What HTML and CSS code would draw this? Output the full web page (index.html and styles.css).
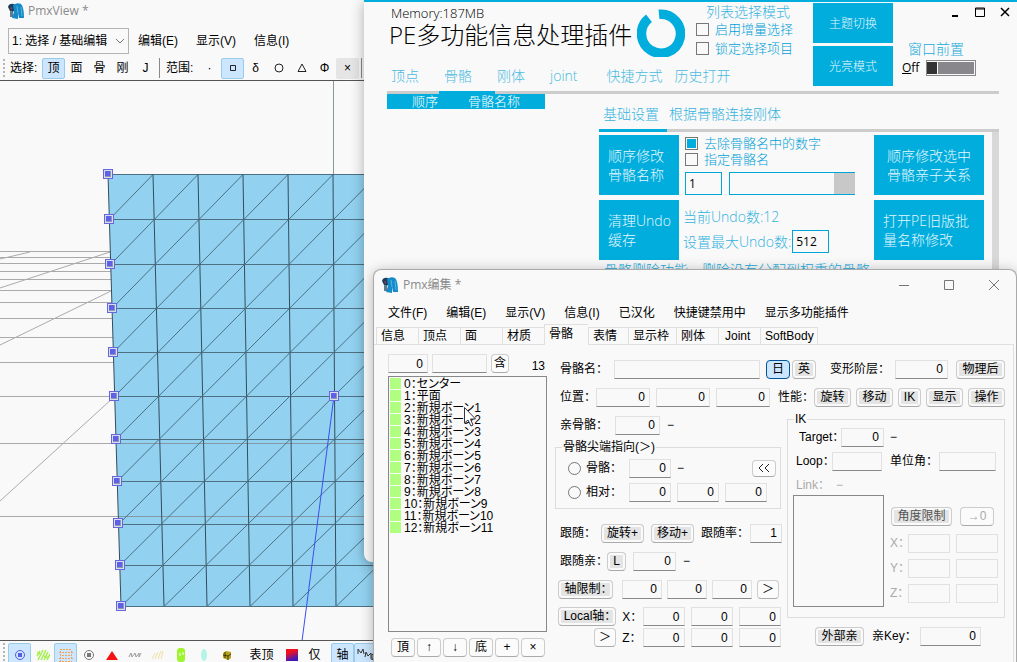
FILE: index.html
```html
<!DOCTYPE html>
<html lang="zh-CN">
<head>
<meta charset="utf-8">
<title>PmxEditor</title>
<link rel="stylesheet" href="styles.css">
</head>
<body>
<svg width="0" height="0" class="defs" aria-hidden="true">
  <symbol id="logo" viewBox="0 0 16 16">
    <path d="M0 4 Q1 0 6 1 L8 5 L5 9 L2 8Z" fill="#173f5e"/>
    <path d="M2 8 L5 9 L5 14 L2 14Z" fill="#5d7c8e"/>
    <path d="M5 2 Q9 -1 13 1 Q16 4 16 15 L11 15 L10 10 L10 16 L4 15 L6 9Z" fill="#168ac8"/>
    <path d="M9 3 L10 10 M13 4 L14 13" stroke="#53b5e4" fill="none"/>
    <path d="M2 5 L4 4 L4 7Z" fill="#b03947"/>
  </symbol>
  <symbol id="mark" viewBox="0 0 10 10">
    <rect x=".5" y=".5" width="9" height="9" fill="#d9dcec" stroke="#6767dd"/>
    <rect x="2" y="2" width="6" height="6" fill="#8b98b2"/>
    <rect x="2" y="2" width="5" height="5" fill="#5f60e8"/>
  </symbol>
</svg>
<main class="desktop">

<section class="window view">
  <header class="view-title"><svg class="logo"><use href="#logo"/></svg><span>PmxView *</span></header>
  <nav class="view-menu">
    <span class="combo"><select aria-label="模式"><option>1: 选择 / 基础编辑</option></select><svg viewBox="0 0 10 6"><path d="M1 1 L5 5 L9 1"/></svg></span>
    <button>编辑(E)</button><button>显示(V)</button><button>信息(I)</button>
  </nav>
  <div class="tools">
    <i class="grip"></i><span class="cap">选择:</span>
    <button class="on">顶</button><button>面</button><button>骨</button><button>刚</button><button>J</button>
    <i class="sep"></i><span class="cap">范围:</span>
    <button>·</button><button class="on" aria-label="矩形"><svg viewBox="0 0 14 14"><path class="ink" d="M4.500 4.500h5v5h-5z"/></svg></button><button>δ</button>
    <button aria-label="圆"><svg viewBox="0 0 14 14"><circle class="ink" cx="7" cy="7" r="4"/></svg></button>
    <button aria-label="三角"><svg viewBox="0 0 14 14"><path class="ink" d="M7 3 L11 10.500 H3Z"/></svg></button>
    <button>Φ</button><button class="dim">×</button><i class="sep"></i>
  </div>
  <svg class="scene" viewBox="0 81 374 560" preserveAspectRatio="xMinYMin slice">
    <path class="floor" d="M0 251.500H374M0 257.500H374M0 263.500H374M0 271.500H374M0 279.500H374M0 290.500H374M0 302.500H374M0 318.500H374M0 337.500H374M0 362.500H374M0 396.500H374M0 443.500H374M0 516.500H374M0 259L30 252M0 288L110 252M0 345L111 291M0 501L114 397"/>
    <path class="pole" d="M333.500 81V174"/>
    <path class="plane" d="M108 174.500H374V606.500H121Z"/>
    <path class="floor faint" d="M118 443.500H374M119 516.500H374"/>
    <path class="mesh" d="M108 174.500H374M109 219.500H374M110 264.500H374M112 308.500H374M113 352.500H374M114 396.500H374M116 439.500H374M117 481.500H374M118 524.500H374M120 565.500H374M121 606.500H374"/>
    <path class="mesh dark" d="M108 174L121 606M153 174L164 606M198 174L207 606M243 174L250 606M288 174L293 606M333 174L336 606"/>
    <path class="mesh" d="M109.300 219.500L153 174.500M110.600 264.500L198 174.500M111.900 308.500L243 174.500M113.200 352.500L288 174.500M114.500 396.500L333 174.500M115.800 439.500L378 174.500M117.100 481.500L378 219.500M118.400 524.500L378 264.500M119.700 565.500L378 308.500M121 606.500L378 352.500M164 606.500L378 396.500M207 606.500L378 439.500M250 606.500L378 481.500M293 606.500L378 524.500M336 606.500L378 565.500"/>
    <path class="bone" d="M334 396L302 641"/>
    <g>
      <use href="#mark" x="103" y="169" width="10" height="10"/><use href="#mark" x="104" y="214" width="10" height="10"/>
      <use href="#mark" x="105" y="259" width="10" height="10"/><use href="#mark" x="107" y="303" width="10" height="10"/>
      <use href="#mark" x="108" y="347" width="10" height="10"/><use href="#mark" x="109" y="391" width="10" height="10"/>
      <use href="#mark" x="111" y="434" width="10" height="10"/><use href="#mark" x="112" y="476" width="10" height="10"/>
      <use href="#mark" x="113" y="518" width="10" height="10"/><use href="#mark" x="115" y="560" width="10" height="10"/>
      <use href="#mark" x="116" y="601" width="10" height="10"/><use href="#mark" x="329" y="391" width="10" height="10"/>
    </g>
  </svg>
  <div class="tools foot">
    <i class="grip"></i>
    <button class="on" aria-label="顶点"><svg viewBox="0 0 14 14"><circle cx="7" cy="7" r="4.500" fill="none" stroke="#5b5be0"/><rect x="5" y="5" width="4" height="4" fill="#5b5be0"/></svg></button>
    <button aria-label="面"><svg viewBox="0 0 14 14"><path d="M1 8L4 3M2 12L7 2M5 12L10 2M8 12L12 4M11 12L14 6M1 4L5 7M8 8L13 10" stroke="#a5ef4e" stroke-width="1.500"/></svg></button>
    <button class="on" aria-label="网格"><svg viewBox="0 0 14 14"><path d="M1 1.500H13M0 4.500H14M3 7.500H11M0 10.500H14M0 13.500H13M1.500 3V13M12.500 3V11" fill="none" stroke="#f2a355" stroke-dasharray="2 1"/></svg></button>
    <button aria-label="骨骼"><svg viewBox="0 0 14 14"><circle cx="7" cy="7" r="4.500" fill="none" stroke="#777"/><rect x="5" y="5" width="4" height="4" fill="#777"/></svg></button>
    <button aria-label="法线"><svg viewBox="0 0 14 14"><path d="M7 3L13 12H1Z" fill="#f31212"/></svg></button>
    <button aria-label="线"><svg viewBox="0 0 14 14"><path d="M1 9L3 5L4 9L7 5L8 9L11 5L11 9L13 5" fill="none" stroke="#999"/></svg></button>
    <button aria-label="切线"><svg viewBox="0 0 14 14"><path d="M1 11L4 5M4 11L7 4M7 11L10 3M10 11L12 3" stroke="#f3dfa5"/></svg></button>
    <button aria-label="刚体"><svg viewBox="0 0 14 14"><rect x="3" y="0" width="8" height="14" rx="3" fill="#9ff32f"/><path d="M6 5V8M9 4V7" stroke="#fff"/></svg></button>
    <button aria-label="胶囊"><svg viewBox="0 0 14 14"><ellipse cx="7" cy="7" rx="3" ry="6" fill="#b2f5e7"/></svg></button>
    <button aria-label="关节"><svg viewBox="0 0 14 14"><path d="M3 5L6 3L11 4V10L8 12L3 10Z" fill="#b7a31c"/><path d="M3 7L8 8L11 6M8 8V12M5 4V10" fill="none" stroke="#403a08"/></svg></button>
    <i class="sep"></i><button class="wide">表顶</button><button aria-label="颜色"><i class="swatch"></i></button><button>仅</button>
    <i class="sep"></i><button class="on">轴</button><button class="on" aria-label="MMD"><svg class="mmd" viewBox="0 0 18 14"><path d="M1 6V1L4 5L6 1L7 6M8 9L9 4L11 8L14 5L14 11M15 12V6Q19 8 15 12"/></svg></button>
  </div>
</section>

<section class="window plugin">
  <header class="plug-head">
    <div class="plug-main">
      <div class="plug-top">
        <div class="brand"><span>Memory:187MB</span><h1>PE多功能信息处理插件</h1></div>
        <svg class="ring" viewBox="0 0 48 48"><path d="M22 5.300 A19.500 19.500 0 1 1 12 9.300" fill="none" stroke="#00addc" stroke-width="9.500"/></svg>
        <div class="modes"><span class="modes-title">列表选择模式</span>
          <label><input type="checkbox">启用增量选择</label><label><input type="checkbox">锁定选择项目</label></div>
      </div>
      <nav class="plug-tabs"><a href="#">顶点</a><a href="#">骨骼</a><a href="#">刚体</a><a href="#">joint</a><a href="#">快捷方式</a><a href="#">历史打开</a></nav>
    </div>
    <div class="themes"><button class="tile">主题切换</button><button class="tile">光亮模式</button></div>
    <div class="plug-side">
      <div class="sys"><button aria-label="最小化"><svg viewBox="0 0 10 10"><path d="M2 9H8" stroke-width="2"/></svg></button><button aria-label="最大化"><svg viewBox="0 0 10 10"><path d="M.5 1H9.500V9.500H.5ZM0 2H10"/></svg></button><button aria-label="关闭"><svg viewBox="0 0 10 10"><path d="M1 1L9 9M9 1L1 9" stroke-width="1.500"/></svg></button></div>
      <span class="front">窗口前置</span>
      <label class="switch"><span><u>O</u>ff</span><input type="checkbox"></label>
    </div>
  </header>
  <div class="rule main-rule"><i></i></div>
  <div class="plug-body">
    <table class="bones"><thead><tr><th>顺序</th><th>骨骼名称</th></tr></thead></table>
    <div class="settings">
      <nav class="sub-tabs"><a href="#">基础设置</a><a href="#">根据骨骼连接刚体</a></nav>
      <div class="rule sub-rule"><i></i></div>
      <div class="scroll">
        <div class="cards">
          <button class="tile left">顺序修改<br>骨骼名称</button>
          <div class="opts">
            <label><input type="checkbox" checked>去除骨骼名中的数字</label>
            <label><input type="checkbox">指定骨骼名</label>
            <div class="fields"><input class="num" aria-label="起始" value="1"><span class="picker"><input aria-label="骨骼名"><button aria-label="选择"></button></span></div>
          </div>
          <button class="tile left big">顺序修改选中<br>骨骼亲子关系</button>
          <button class="tile left">清理Undo<br>缓存</button>
          <div class="undo"><span>当前Undo数:12</span><label>设置最大Undo数:<input class="num" value="512"></label></div>
          <button class="tile left">打开PE旧版批<br>量名称修改</button>
        </div>
        <fieldset class="remove"><legend>骨骼删除功能，删除没有分配到权重的骨骼</legend></fieldset>
      </div>
    </div>
  </div>
</section>

<section class="window editor">
  <header class="ed-title"><svg class="logo"><use href="#logo"/></svg><span>Pmx编集 *</span>
    <div class="ctl"><button aria-label="最小化"><svg viewBox="0 0 12 12"><path d="M1 6.500H11"/></svg></button><button aria-label="最大化"><svg viewBox="0 0 12 12"><path d="M1.500 1.500H10.500V10.500H1.500Z"/></svg></button><button aria-label="关闭"><svg viewBox="0 0 12 12"><path d="M1 1L11 11M11 1L1 11"/></svg></button></div></header>
  <nav class="ed-menu"><button>文件(F)</button><button>编辑(E)</button><button>显示(V)</button><button>信息(I)</button><button>已汉化</button><button>快捷键禁用中</button><button>显示多功能插件</button></nav>
  <div class="ed-tabs" role="tablist"><button role="tab">信息</button><button role="tab">顶点</button><button role="tab">面</button><button role="tab">材质</button><button role="tab" class="sel" aria-selected="true">骨骼</button><button role="tab">表情</button><button role="tab">显示枠</button><button role="tab">刚体</button><button role="tab">Joint</button><button role="tab">SoftBody</button></div>
  <div class="panel">
    <div class="list-col">
      <div class="search"><input aria-label="序号" value="0"><input aria-label="查找"><button class="btn">含</button><span>13</span></div>
      <ul class="list">
        <li>0：センター</li><li>1：平面</li><li>2：新規ボーン1</li><li>3：新規ボーン2</li><li>4：新規ボーン3</li><li>5：新規ボーン4</li><li>6：新規ボーン5</li><li>7：新規ボーン6</li><li>8：新規ボーン7</li><li>9：新規ボーン8</li><li>10：新規ボーン9</li><li>11：新規ボーン10</li><li>12：新規ボーン11</li>
      </ul>
      <div class="moves"><button class="btn">頂</button><button class="btn">↑</button><button class="btn">↓</button><button class="btn">底</button><button class="btn">+</button><button class="btn">×</button></div>
    </div>
    <form class="form">
      <div class="row name"><label for="nm">骨骼名：</label><input id="nm"><button type="button" class="btn blue">日</button><button type="button" class="btn tg">英</button><label for="lv">变形阶层：</label><input id="lv" value="0"><button type="button" class="btn tg">物理后</button></div>
      <div class="row pos"><label for="px">位置：</label><input id="px" value="0"><input aria-label="位置 Y" value="0"><input aria-label="位置 Z" value="0"><span>性能：</span><div class="caps"><button type="button" class="btn tg">旋转</button><button type="button" class="btn tg">移动</button><button type="button" class="btn tg slim">IK</button><button type="button" class="btn tg">显示</button><button type="button" class="btn tg">操作</button></div></div>
      <div class="halves">
        <div class="half">
          <div class="row parent"><label for="pa">亲骨骼：</label><input id="pa" value="0"><span>−</span></div>
          <fieldset class="box tip"><legend>骨骼尖端指向(＞)</legend>
            <div class="row tiprow"><label><input type="radio" name="tip">骨骼：</label><input aria-label="骨骼" value="0"><span>−</span><button type="button" class="btn back" aria-label="展开"><svg viewBox="0 0 12 10"><path d="M5 1L1 5L5 9M11 1L7 5L11 9"/></svg></button></div>
            <div class="row tiprow"><label><input type="radio" name="tip">相对：</label><input aria-label="相对 X" value="0"><input aria-label="相对 Y" value="0"><input aria-label="相对 Z" value="0"></div>
          </fieldset>
          <div class="row follow"><span>跟随：</span><button type="button" class="btn tg">旋转+</button><button type="button" class="btn tg">移动+</button><label for="fr">跟随率：</label><input id="fr" value="1"></div>
          <div class="row fparent"><label for="fp">跟随亲：</label><button type="button" class="btn tg">L</button><input id="fp" value="0"><span>−</span></div>
          <div class="row axis"><button type="button" class="btn tg">轴限制：</button><input aria-label="轴 X" value="0"><input aria-label="轴 Y" value="0"><input aria-label="轴 Z" value="0"><button type="button" class="btn">＞</button></div>
          <div class="local">
            <button type="button" class="btn tg">Local轴：</button><span>X：</span><input aria-label="X 1" value="0"><input aria-label="X 2" value="0"><input aria-label="X 3" value="0">
            <button type="button" class="btn go">＞</button><span>Z：</span><input aria-label="Z 1" value="0"><input aria-label="Z 2" value="0"><input aria-label="Z 3" value="0">
          </div>
        </div>
        <div class="half ikcol">
          <fieldset class="box ik"><legend>IK</legend>
            <div class="row target"><label for="tg">Target：</label><input id="tg" value="0"><span>−</span></div>
            <div class="row loop"><label for="lp">Loop：</label><input id="lp"><label for="an">单位角：</label><input id="an"></div>
            <div class="row off link"><span>Link：</span><span>−</span></div>
            <div class="limits"><ul class="links"></ul>
              <div class="angles"><div class="anglehead"><button type="button" class="btn tg grey">角度限制</button><button type="button" class="btn" disabled>→0</button></div>
                <div class="row off"><span>X：</span><input disabled aria-label="X 下限"><input disabled aria-label="X 上限"></div>
                <div class="row off"><span>Y：</span><input disabled aria-label="Y 下限"><input disabled aria-label="Y 上限"></div>
                <div class="row off"><span>Z：</span><input disabled aria-label="Z 下限"><input disabled aria-label="Z 上限"></div></div>
            </div>
          </fieldset>
          <div class="row outer"><button type="button" class="btn tg">外部亲</button><label for="ky">亲Key：</label><input id="ky" value="0"></div>
        </div>
      </div>
    </form>
  </div>
</section>
<svg class="cursor" viewBox="0 0 12 20" aria-hidden="true"><path d="M.5 .5V16L4 13L7 19L9 18L6.500 12H11.500Z" fill="#fff" stroke="#334"/></svg>
</main>
</body>
</html>
```
FILE: styles.css
```css
* { box-sizing: border-box; }
body { margin: 0; background: #f9f9f9; font: 12px/16px "Liberation Sans", "Noto Sans CJK SC", sans-serif; color: #000; }
button, input, select { font: inherit; color: inherit; margin: 0; padding: 0; border: 0; background: none; border-radius: 0; outline: 0; min-width: 0; }
button { white-space: nowrap; }
a { text-decoration: none; color: inherit; }
fieldset, ul, h1 { margin: 0; padding: 0; border: 0; min-width: 0; }
ul { list-style: none; }
.defs { position: absolute; }
.desktop { position: relative; height: 100vh; overflow: hidden; }
.window { position: absolute; background: #f9f9f9; }
.logo { width: 16px; height: 16px; }

/* 3D view */
.view { left: 0; top: 0; bottom: 0; width: 374px; display: flex; flex-direction: column; }
.view-title { display: flex; align-items: center; gap: 4px; height: 22px; padding: 0 8px; color: #8a8a8a; font-family: "Open Sans", sans-serif; }
.view-menu { display: flex; align-items: center; height: 34px; padding-left: 8px; gap: 18px; }
.view-menu button { line-height: 20px; padding-top: 4px; }
.combo { display: flex; align-items: center; position: relative; width: 121px; height: 26px; margin: 3px -9px 0 0; border: 1px solid #b4b4b4; }
.combo select { width: 100%; appearance: none; padding-left: 3px; }
.combo svg { position: absolute; right: 3px; width: 10px; height: 6px; fill: none; stroke: #777; pointer-events: none; }
.tools { display: flex; align-items: center; height: 25px; padding-left: 3px; border-bottom: 1px solid #555; white-space: nowrap; }
.tools button { width: 23px; height: 21px; flex: none; display: flex; align-items: center; justify-content: center; border: 1px solid transparent; border-radius: 2px; }
.tools button.on { background: #cce6ff; border-color: #9acbe9; }
.tools button.dim { background: #e5e5e5; }
.tools button.wide { width: 37px; }
.tools svg { width: 14px; height: 14px; }
.tools .mmd { width: 18px; fill: none; stroke: #333; }
.ink { fill: none; stroke: #222; }
.cap { width: 32px; }
.grip { width: 2px; height: 18px; margin-right: 5px; border-left: 2px dotted #b5b5b5; }
.sep { width: 1px; height: 20px; margin: 0 6px 0 2px; background: #888; }
.swatch { width: 12px; height: 12px; background: linear-gradient(160deg, #f01020 30%, #4418b8 80%); }
.scene { flex: 1; width: 100%; min-height: 0; display: block; }
.foot { height: 22px; border: 0; border-top: 1px solid #555; padding: 2px 0 0; align-items: flex-start; }
.foot button { height: 23px; }
.foot .grip { margin-left: 3px; margin-right: 3px; }
.foot .sep { margin: 0 3px 0 2px; }
.floor { stroke: #aaa; fill: none; }
.faint { stroke: #8099a5; }
.pole { stroke: #8e9a8e; }
.plane { fill: #92d2f0; }
.mesh { stroke: #4d7183; fill: none; }
.dark { stroke: #344d5d; }
.bone { stroke: #3b4ef0; }

/* plugin */
.plugin { left: 364px; right: 0; top: 0; height: 562px; padding: 0 18px 0 23px; border-top: 2px solid #00addc; border-radius: 0 0 8px 8px; overflow: hidden; color: #20a9dc; font: 300 14px/19px "Open Sans", "Noto Sans CJK SC", sans-serif; box-shadow: 0 2px 14px rgb(0 0 0 / 30%); }
.plug-head { display: flex; height: 89px; }
.plug-main { flex: 1; display: flex; flex-direction: column; justify-content: space-between; }
.plug-top { display: flex; padding-top: 2px; }
.brand { width: 250px; padding-left: 2px; color: #000; }
.brand span { display: block; font-size: 13px; line-height: 18px; padding-left: 2px; }
h1 { font-size: 24px; font-weight: 300; line-height: 26px; white-space: nowrap; }
.ring { width: 48px; height: 48px; margin: 5px 11px 0 0; }
.modes { display: flex; flex-direction: column; font-size: 13px; color: #00a0d8; }
.modes-title { font-size: 14px; line-height: 16px; padding-left: 10px; color: #35b3df; }
label { display: flex; align-items: center; white-space: nowrap; }
.plugin input[type=checkbox] { appearance: none; width: 13px; height: 13px; margin-right: 6px; border: 1px solid #777; background: #f9f9f9; }
.plugin input[type=checkbox]:checked { background: #00addc; box-shadow: inset 0 0 0 1px #f9f9f9; }
.plug-tabs { display: flex; line-height: 20px; padding: 0 0 5px 4px; gap: 25px; color: #4ab9df; }
.plug-tabs a:nth-child(4) { padding-right: 4px; }
.plug-tabs a:last-child { margin-left: -13px; }
.tile { background: #00addc; color: #e4f7ff; display: flex; align-items: center; justify-content: center; font-size: 12px; }
.themes { width: 80px; display: grid; grid-template-rows: 40px 40px; gap: 3px; padding-top: 1px; }
.plug-side { width: 106px; display: flex; flex-direction: column; padding-left: 9px; }
.sys { display: flex; justify-content: flex-end; gap: 15px; height: 37px; margin-right: -11px; padding-top: 5px; align-items: flex-start; }
.sys button { width: 10px; height: 10px; }
.sys svg { width: 10px; height: 10px; display: block; fill: none; stroke: #000; }
.front { padding-left: 6px; line-height: 20px; }
.switch { font-size: 12px; line-height: 18px; color: #000; gap: 7px; font-weight: 400; }
.plugin .switch input { width: 50px; height: 16px; margin: 0; background: linear-gradient(90deg, #333 10px, #f9f9f9 10px 11px, #88888c 11px); border: 1px solid #888; box-shadow: inset -1px 0 #f9f9f9, inset 0 1px #f9f9f9, inset 0 -1px #f9f9f9; }
.rule { height: 3px; background: #ccc; display: flex; }
.rule i { background: #00addc; }
.main-rule i { width: 56px; margin-left: 52px; }
.sub-rule i { width: 68px; }
.plug-body { display: flex; justify-content: space-between; }
.bones { width: 158px; height: 15px; border-collapse: collapse; align-self: flex-start; background: #00addc; color: #fff; font-size: 13px; line-height: 15px; }
.bones th { font-weight: 300; padding: 0 0 0 25px; text-align: left; }
.bones th:first-child { width: 56px; }
.settings { width: 400px; }
.sub-tabs { display: flex; gap: 10px; padding: 10px 0 6px 4px; color: #35b3df; }
.scroll { border-right: 7px solid #d8d8d8; padding: 3px 8px 0 0; height: 430px; }
.cards { display: grid; grid-template-columns: 80px 1fr 110px; grid-auto-rows: 60px; row-gap: 5px; }
.tile.left { font-size: 14px; line-height: 19px; text-align: left; justify-content: flex-start; padding-left: 9px; }
.tile.big { justify-content: center; padding: 0; }
.opts { padding-left: 6px; font-size: 13px; line-height: 16px; color: #00a0d8; }
.fields { display: flex; gap: 7px; padding-top: 5px; }
.plugin input.num { width: 37px; height: 23px; border: 1px solid #00a6d8; color: #000; font-size: 12px; font-weight: 400; padding-left: 3px; }
.picker { display: flex; width: 126px; height: 23px; border: 1px solid #00a6d8; border-right: 0; }
.picker input { flex: 1; }
.picker button { width: 21px; background: #c8c8c8; }
.undo { padding: 7px 0 0 4px; display: flex; flex-direction: column; gap: 4px; color: #35b3df; }
.undo label { gap: 1px; }
.remove { border: 1px solid #ccc; height: 100px; }
.remove legend { margin-left: 2px; white-space: nowrap; }

/* model editor */
.editor { left: 373px; right: 0; top: 269px; bottom: 0; display: flex; flex-direction: column; border: 1px solid #aaa; border-bottom: 0; border-radius: 8px 8px 0 0; box-shadow: 0 2px 14px rgb(0 0 0 / 28%); font-feature-settings: "palt"; }
.ed-title { display: flex; align-items: center; gap: 5px; height: 30px; padding: 0 16px 0 8px; color: #8a8a8a; font-family: "Open Sans", "Noto Sans CJK SC", sans-serif; }
.ctl { margin-left: auto; display: flex; gap: 33px; }
.ctl button, .ctl svg { width: 12px; height: 12px; display: block; fill: none; stroke: #777; }
.ed-menu { display: flex; gap: 19px; height: 26px; padding-left: 14px; align-items: center; }
.ed-tabs { display: flex; align-items: flex-end; height: 19px; padding-left: 2px; margin-bottom: -1px; position: relative; }
.ed-tabs button { width: 42px; height: 18px; line-height: 16px; text-align: left; padding-left: 4px; border: 1px solid #e0e0e0; border-right: 0; }
.ed-tabs button:nth-child(5) { width: 44px; height: 21px; background: #f9f9f9; border-bottom: 0; line-height: 18px; padding-bottom: 2px; }
.ed-tabs button:nth-child(6) { width: 40px; }
.ed-tabs button:nth-child(7) { width: 48px; }
.ed-tabs button:nth-child(9) { padding-left: 6px; }
.ed-tabs button:nth-child(10) { width: 58px; border-right: 1px solid #e0e0e0; }
.panel { flex: 1; display: flex; min-height: 0; gap: 8px; margin-right: 2px; border: 1px solid #e0e0e0; border-width: 1px 1px 0 0; padding: 9px 8px 5px 14px; }
.panel input:not([type=radio]) { height: 19px; border: 1px solid #e1e1e1; border-bottom-color: #888; text-align: right; padding: 0 4px; width: 100%; }
.panel input:disabled { border-bottom-color: #e1e1e1; }
.btn { height: 19px; line-height: 15px; border: 1px solid #ccc; border-bottom-color: #aaa; border-radius: 4px; background: #fbfbfb; text-align: center; }
.btn.tg { background: #e4e4e4; box-shadow: inset 0 0 0 2px #fafafa; }
.btn.blue { background: #cce6ff; border-color: #005499; }
.btn:disabled, .off { color: #aaa; }
.btn.grey { color: #555; }
.list-col { width: 159px; flex: none; display: flex; flex-direction: column; }
.search { display: grid; grid-template-columns: 40px 55px 18px 1fr; gap: 4px; height: 22px; }
.search .btn { margin: 0; }
.search span { text-align: right; padding: 4px 2px 0 0; }
.list { flex: 1; min-height: 0; overflow: hidden; border: 1px solid #888; padding: 1px; font-family: "Liberation Sans", "Noto Sans CJK JP", sans-serif; }
.list li { height: 12px; line-height: 12px; display: flex; gap: 3px; white-space: nowrap; }
.list li::before { content: ""; width: 11px; height: 11px; background: #b0ff80; }
.moves { display: grid; grid-template-columns: repeat(6, 1fr); gap: 2px; padding: 6px 2px 0 3px; height: 25px; }
.form { flex: 1; display: flex; flex-direction: column; gap: 8px; padding-top: 5px; }
.row { display: grid; align-items: center; height: 20px; white-space: nowrap; }
.name { grid-template-columns: 54px 1fr 24px 26px 79px 53px 57px; padding-left: 5px; }
.name #nm { width: calc(100% - 6px); }
.name .tg { margin-left: 2px; }
.name label:nth-of-type(2) { padding-left: 14px; }
.name .tg:last-child { margin-left: 8px; }
.pos { grid-template-columns: 30px 54px 54px 54px 31px 1fr; gap: 6px; padding-left: 5px; }
.pos > span { padding-left: 2px; }
.caps { display: grid; grid-template-columns: 37px 37px 23px 37px 37px; gap: 5px; justify-content: end; }
.halves { display: grid; grid-template-columns: 226px 1fr; gap: 6px; }
.half { display: flex; flex-direction: column; gap: 8px; }
.parent { grid-template-columns: 55px 45px 1fr; padding-left: 5px; }
.parent span, .fparent span { padding-left: 7px; }
.fparent span { padding: 0; }
.box { border: 1px solid #ddd; }
.box legend { line-height: 12px; padding: 0 1px; }
.tip legend { margin-left: -6px; }
.tip { height: 68px; margin: -2px 0 6px; padding: 3px 12px 0; }
.tiprow { grid-template-columns: 61px 42px 42px 42px; column-gap: 6px; height: 24px; }
.tiprow { grid-template-columns: 55px 42px 42px 42px; }
.tiprow input[type=radio] { appearance: none; width: 13px; height: 13px; border: 1px solid #777; border-radius: 50%; margin-right: 5px; }
.tiprow .back { display: flex; align-items: center; justify-content: center; width: 24px; height: 17px; justify-self: end; margin-right: -9px; }
.back svg { width: 12px; height: 10px; fill: none; stroke: #222; }
.follow { grid-template-columns: 34px 43px 43px 1fr 32px; column-gap: 7px; padding-left: 5px; }
.fparent { grid-template-columns: 40px 19px 43px 1fr; column-gap: 7px; padding-left: 5px; }
.axis { grid-template-columns: 59px 40px 40px 40px 22px; column-gap: 5px; padding-left: 3px; }
.axis .btn:first-child { width: 55px; }
.local { display: grid; grid-template-columns: 58px 14px 42px 42px 42px; column-gap: 6px; row-gap: 2px; padding-left: 3px; align-items: center; justify-content: space-between; }
.local .go { width: 22px; justify-self: end; }
.ik { height: 205px; padding: 0 5px; margin-top: -2px; }
.ik legend { margin-left: 1px; }
.ik .row { margin-bottom: 4px; }
.ik .target { margin-top: 2px; }
.target { grid-template-columns: 42px 43px 1fr; padding-left: 6px; }
.target span { padding-left: 6px; }
.loop { grid-template-columns: 36px 50px 57px 1fr; padding: 0 3px; }
.loop label:nth-of-type(2) { padding-left: 8px; }
.ik .link { grid-template-columns: 34px 1fr; padding-left: 3px; column-gap: 6px; margin: 0; }
.limits { display: grid; grid-template-columns: 91px 1fr; gap: 6px; }
.links { height: 112px; border: 1px solid #888; }
.angles { padding-top: 12px; }
.anglehead { display: grid; grid-template-columns: 61px 34px; gap: 8px; height: 26px; padding-left: 1px; }
.ik .angles .row { grid-template-columns: 12px 42px 42px; column-gap: 6px; margin-bottom: 5px; }
.outer { grid-template-columns: 49px 40px 61px; column-gap: 8px; padding-left: 28px; }
.cursor { position: absolute; left: 464px; top: 407px; width: 12px; height: 20px; }
```
